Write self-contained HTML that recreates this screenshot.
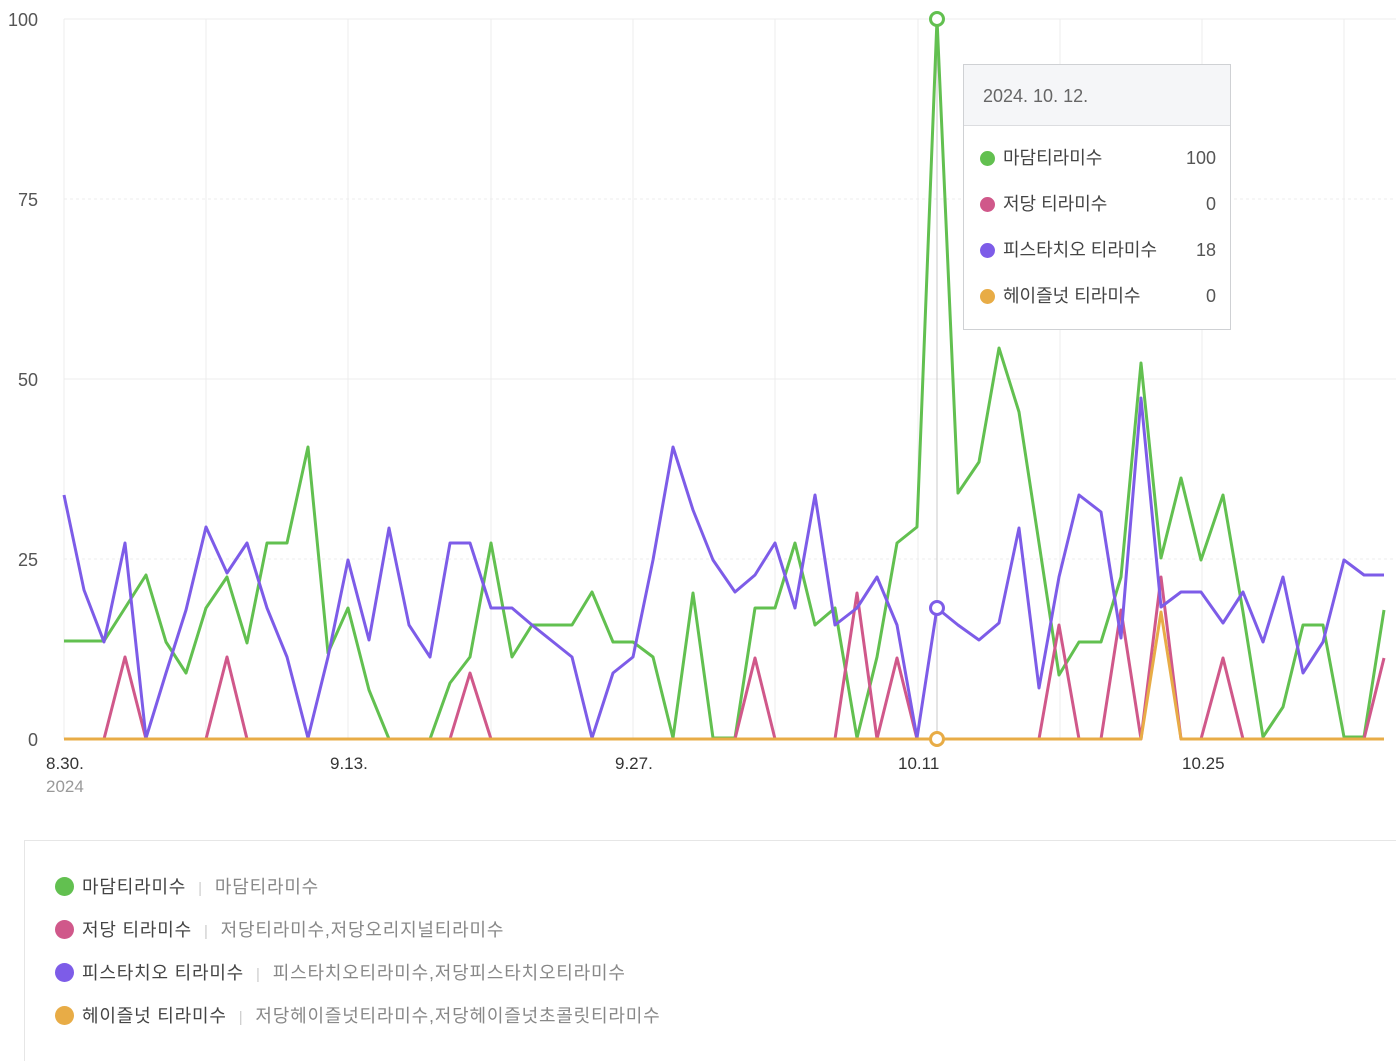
<!DOCTYPE html>
<html><head><meta charset="utf-8"><style>
html,body{margin:0;padding:0;background:#fff;width:1396px;height:1044px;overflow:hidden;font-family:"Liberation Sans","Noto Sans CJK KR",sans-serif;}
.tt{position:absolute;left:963px;top:64px;width:266px;height:264px;border:1px solid #cfd1d4;background:#fff;}
.tt .h{height:60px;background:#f5f6f8;border-bottom:1px solid #dcdde0;font-size:18px;color:#666;line-height:62px;padding-left:19px;}
.tt .r{position:absolute;left:16px;right:14px;font-size:18px;color:#444;height:24px;line-height:24px;}
.tt .r i,.lg i{display:inline-block;width:15px;height:15px;border-radius:50%;vertical-align:-2px;margin-right:8px;}
.tt .r b{position:absolute;right:0;font-weight:normal;color:#555;}
.lg{position:absolute;left:24px;top:840px;width:1400px;height:220px;border-top:1px solid #e6e6e6;border-left:1px solid #e6e6e6;}
.lg .r{position:absolute;left:30px;font-size:18px;color:#444;letter-spacing:0.8px;}
.lg .r i{width:19px;height:19px;vertical-align:-3px;margin-right:8px;}
.lg .s{color:#ccc;margin:0 12px;font-size:15px;}
.lg .d{color:#888;}
</style></head><body>
<svg width="1396" height="840" style="position:absolute;left:0;top:0" xmlns="http://www.w3.org/2000/svg">
<g stroke="#ececec" stroke-width="1">
<line x1="64" y1="19" x2="1396" y2="19"/>
<line x1="64" y1="199" x2="1396" y2="199" stroke-dasharray="3,3"/>
<line x1="64" y1="379" x2="1396" y2="379"/>
<line x1="64" y1="559" x2="1396" y2="559" stroke-dasharray="3,3"/>
<line x1="64" y1="19" x2="64" y2="739"/><line x1="206" y1="19" x2="206" y2="739"/><line x1="348" y1="19" x2="348" y2="739"/><line x1="491" y1="19" x2="491" y2="739"/><line x1="633" y1="19" x2="633" y2="739"/><line x1="775" y1="19" x2="775" y2="739"/><line x1="918" y1="19" x2="918" y2="739"/><line x1="1060" y1="19" x2="1060" y2="739"/><line x1="1202" y1="19" x2="1202" y2="739"/><line x1="1344" y1="19" x2="1344" y2="739"/>
</g>
<line x1="937" y1="19" x2="937" y2="739" stroke="#c8c8c8" stroke-width="1"/>
<g font-size="18" fill="#555" text-anchor="end" font-family="Liberation Sans, sans-serif">
<text x="38" y="26">100</text><text x="38" y="206">75</text><text x="38" y="386">50</text><text x="38" y="566">25</text><text x="38" y="746">0</text>
</g>
<g font-size="17" fill="#333" font-family="Liberation Sans, sans-serif">
<text x="46" y="769">8.30.</text><text x="46" y="792" fill="#999">2024</text>
<text x="330" y="769">9.13.</text><text x="615" y="769">9.27.</text><text x="898" y="769">10.11</text><text x="1182" y="769">10.25</text>
</g>
<g fill="none" stroke-width="3" stroke-linejoin="round">
<polyline stroke="#62c050" points="64,641 84,641 104,641 125,608 146,575 166,642 186,673 206,608 227,577 247,643 267,543 287,543 308,447 328,653 348,608 369,690 389,739 409,739 430,739 450,683 470,657 491,543 512,657 532,625 552,625 572,625 592,592 613,642 633,642 653,657 673,738 693,593 713,738 735,738 755,608 775,608 795,543 815,625 835,608 857,738 877,657 897,543 917,527 937,19 958,493 979,462 999,348 1019,412 1039,543 1059,675 1079,642 1101,642 1121,577 1141,363 1161,558 1181,478 1201,560 1223,495 1243,612 1263,737 1283,707 1303,625 1323,625 1344,737 1364,737 1384,610"/>
<polyline stroke="#d0588a" points="64,739 104,739 125,657 146,739 206,739 227,657 247,739 450,739 470,673 491,739 735,739 755,658 775,739 835,739 857,593 877,739 897,658 917,739 1039,739 1059,625 1079,739 1101,739 1121,610 1141,739 1161,577 1181,739 1201,739 1223,658 1243,739 1364,739 1384,658"/>
<polyline stroke="#7d5ce8" points="64,495 84,590 104,642 125,543 146,738 166,673 186,610 206,527 227,573 247,543 267,608 287,657 308,738 328,657 348,560 369,640 389,528 409,625 430,657 450,543 470,543 491,608 512,608 532,625 552,641 572,657 592,738 613,673 633,657 653,560 673,447 693,510 713,560 735,592 755,575 775,543 795,608 815,495 835,625 857,608 877,577 897,625 917,738 937,608 958,625 979,640 999,623 1019,528 1039,688 1059,577 1079,495 1101,512 1121,638 1141,398 1161,607 1181,592 1201,592 1223,623 1243,592 1263,642 1283,577 1303,673 1323,642 1344,560 1364,575 1384,575"/>
<polyline stroke="#e8ac46" points="64,739 1141,739 1161,612 1181,739 1384,739"/>
</g>
<circle cx="937" cy="19" r="6.5" fill="#fff" stroke="#62c050" stroke-width="3"/>
<circle cx="937" cy="608" r="6.5" fill="#fff" stroke="#7d5ce8" stroke-width="3"/>
<circle cx="937" cy="739" r="6.5" fill="#fff" stroke="#e8ac46" stroke-width="3"/>
</svg>
<div class="tt"><div class="h">2024. 10. 12.</div>
<div class="r" style="top:81px"><i style="background:#62c050"></i>마담티라미수<b>100</b></div>
<div class="r" style="top:127px"><i style="background:#d0588a"></i>저당 티라미수<b>0</b></div>
<div class="r" style="top:173px"><i style="background:#7d5ce8"></i>피스타치오 티라미수<b>18</b></div>
<div class="r" style="top:219px"><i style="background:#e8ac46"></i>헤이즐넛 티라미수<b>0</b></div>
</div>
<div class="lg">
<div class="r" style="top:32px"><i style="background:#62c050"></i>마담티라미수<span class="s">|</span><span class="d">마담티라미수</span></div>
<div class="r" style="top:75px"><i style="background:#d0588a"></i>저당 티라미수<span class="s">|</span><span class="d">저당티라미수,저당오리지널티라미수</span></div>
<div class="r" style="top:118px"><i style="background:#7d5ce8"></i>피스타치오 티라미수<span class="s">|</span><span class="d">피스타치오티라미수,저당피스타치오티라미수</span></div>
<div class="r" style="top:161px"><i style="background:#e8ac46"></i>헤이즐넛 티라미수<span class="s">|</span><span class="d">저당헤이즐넛티라미수,저당헤이즐넛초콜릿티라미수</span></div>
</div>
</body></html>
